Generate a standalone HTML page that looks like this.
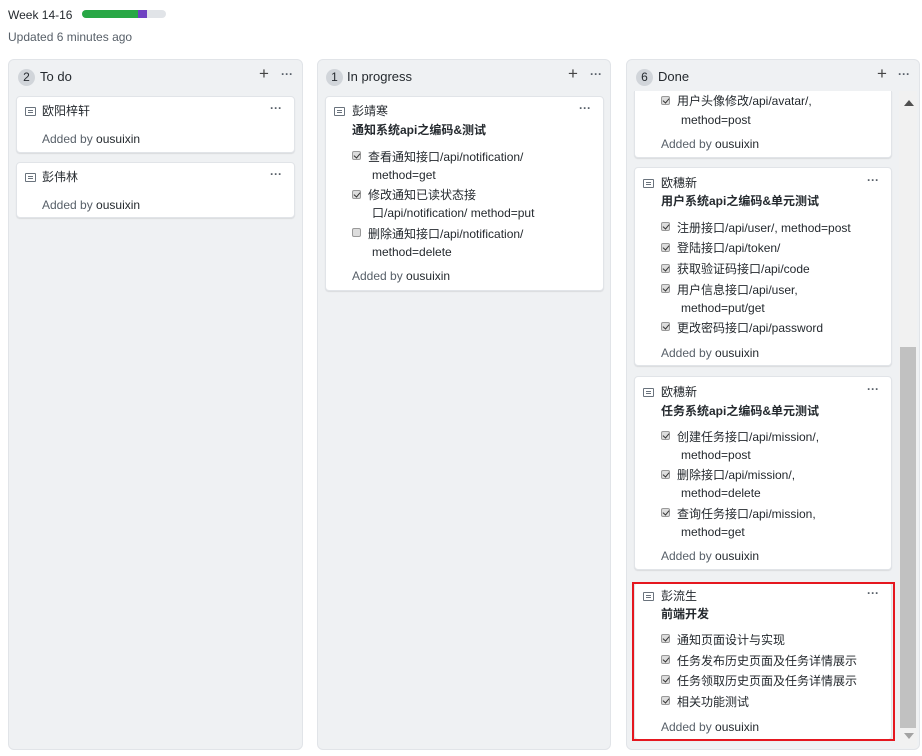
<!DOCTYPE html>
<html><head><meta charset="utf-8"><style>
*{margin:0;padding:0;box-sizing:border-box}
body{width:922px;height:756px;background:#fff;font-family:"Liberation Sans","Noto Sans CJK SC",sans-serif;font-size:12px;color:#24292e;position:relative;overflow:hidden}
.a{position:absolute;white-space:nowrap;line-height:16px}
.col{position:absolute;top:59px;height:691px;background:#eff1f3;border:1px solid #e1e4e8;border-radius:6px}
.card{position:absolute;background:#fff;border:1px solid #e1e4e8;border-radius:4px;box-shadow:0 1px 1px rgba(27,31,35,.1)}
.g{color:#586069}
.b{font-weight:bold}
.cnt{position:absolute;width:17px;height:17px;border-radius:9px;background:#d1d5da;font-size:12px;text-align:center;line-height:17px;color:#24292e}
.h{font-size:13px;font-weight:normal;color:#24292e}
.dots{position:absolute;font-size:12px;color:#586069;letter-spacing:0;font-weight:bold}
.ic{position:absolute;width:11px;height:9px;border:1px solid #6a737d;border-radius:1px}
.ic:after{content:"";position:absolute;left:2px;top:2px;width:5px;height:1px;background:#6a737d;box-shadow:0 2px 0 #6a737d}
.cb{position:absolute;width:9px;height:9px;background:#ddd;border:1px solid #999;border-radius:2px}
.cb.c:after{content:"";position:absolute;left:2px;top:0px;width:3px;height:5px;border:solid #333;border-width:0 1.5px 1.5px 0;transform:rotate(40deg)}
</style></head><body>
<div class="a" style="left:8px;top:7px;font-size:12px">Week 14-16</div>
<div style="position:absolute;left:82px;top:10px;width:84px;height:8px;background:#e1e4e8;border-radius:4px;overflow:hidden"><div style="width:56px;height:8px;background:#28a745;float:left"></div><div style="width:9px;height:8px;background:#6f42c1;float:left"></div></div>
<div class="a g" style="left:8px;top:29px">Updated 6 minutes ago</div>

<!-- To do -->
<div class="col" style="left:8px;width:295px"></div>
<div class="cnt" style="left:18px;top:69px">2</div>
<div class="a h" style="left:40px;top:69px">To do</div>
<div class="a" style="left:259px;top:66px;font-size:17px;color:#444">+</div>
<div class="dots" style="left:281px;top:67px">···</div>
<div class="card" style="left:16px;top:96px;width:279px;height:57px"></div>
<div class="ic" style="left:25px;top:107px"></div>
<div class="a" style="left:42px;top:103px">欧阳梓轩</div>
<div class="dots" style="left:270px;top:101px">···</div>
<div class="a g" style="left:42px;top:131px">Added by <span style="color:#24292e">ousuixin</span></div>
<div class="card" style="left:16px;top:162px;width:279px;height:56px"></div>
<div class="ic" style="left:25px;top:173px"></div>
<div class="a" style="left:42px;top:169px">彭伟林</div>
<div class="dots" style="left:270px;top:167px">···</div>
<div class="a g" style="left:42px;top:197px">Added by <span style="color:#24292e">ousuixin</span></div>

<!-- In progress -->
<div class="col" style="left:317px;width:294px"></div>
<div class="cnt" style="left:326px;top:69px">1</div>
<div class="a h" style="left:347px;top:69px">In progress</div>
<div class="a" style="left:568px;top:66px;font-size:17px;color:#444">+</div>
<div class="dots" style="left:590px;top:67px">···</div>
<div class="card" style="left:325px;top:96px;width:279px;height:195px"></div>
<div class="ic" style="left:334px;top:107px"></div>
<div class="a" style="left:352px;top:103px">彭靖寒</div>
<div class="dots" style="left:579px;top:101px">···</div>
<div class="a b" style="left:352px;top:122px">通知系统api之编码&amp;测试</div>
<div class="cb c" style="left:352px;top:151px"></div>
<div class="a" style="left:368px;top:149px">查看通知接口/api/notification/</div>
<div class="a" style="left:372px;top:167px">method=get</div>
<div class="cb c" style="left:352px;top:190px"></div>
<div class="a" style="left:368px;top:187px">修改通知已读状态接</div>
<div class="a" style="left:372px;top:205px">口/api/notification/ method=put</div>
<div class="cb" style="left:352px;top:228px"></div>
<div class="a" style="left:368px;top:226px">删除通知接口/api/notification/</div>
<div class="a" style="left:372px;top:244px">method=delete</div>
<div class="a g" style="left:352px;top:268px">Added by <span style="color:#24292e">ousuixin</span></div>

<!-- Done -->
<div class="col" style="left:626px;width:294px"></div>
<div class="cnt" style="left:636px;top:69px">6</div>
<div class="a h" style="left:658px;top:69px">Done</div>
<div class="a" style="left:877px;top:66px;font-size:17px;color:#444">+</div>
<div class="dots" style="left:898px;top:67px">···</div>
<div style="position:absolute;left:627px;top:91px;width:292px;height:657px;overflow:hidden">
 <div style="position:absolute;left:272px;top:0;width:18px;height:657px;background:#f1f1f1"></div>
 <div style="position:absolute;left:273px;top:256px;width:16px;height:381px;background:#c1c1c1"></div>
 <div style="position:absolute;left:277px;top:9px;width:0;height:0;border-left:5px solid transparent;border-right:5px solid transparent;border-bottom:6px solid #505050"></div>
 <div style="position:absolute;left:277px;top:642px;width:0;height:0;border-left:5px solid transparent;border-right:5px solid transparent;border-top:6px solid #a3a3a3"></div>
</div>
<div class="card" style="left:634px;top:91px;width:258px;height:67px;border-top:none;border-radius:0 0 4px 4px"></div>
<div class="cb c" style="left:661px;top:96px"></div>
<div class="a" style="left:677px;top:93px">用户头像修改/api/avatar/,</div>
<div class="a" style="left:681px;top:112px">method=post</div>
<div class="a g" style="left:661px;top:136px">Added by <span style="color:#24292e">ousuixin</span></div>

<div class="card" style="left:634px;top:167px;width:258px;height:199px"></div>
<div class="ic" style="left:643px;top:179px"></div>
<div class="a" style="left:661px;top:175px">欧穗新</div>
<div class="dots" style="left:867px;top:173px">···</div>
<div class="a b" style="left:661px;top:193px">用户系统api之编码&amp;单元测试</div>
<div class="cb c" style="left:661px;top:222px"></div><div class="a" style="left:677px;top:220px">注册接口/api/user/, method=post</div>
<div class="cb c" style="left:661px;top:243px"></div><div class="a" style="left:677px;top:240px">登陆接口/api/token/</div>
<div class="cb c" style="left:661px;top:264px"></div><div class="a" style="left:677px;top:261px">获取验证码接口/api/code</div>
<div class="cb c" style="left:661px;top:284px"></div><div class="a" style="left:677px;top:282px">用户信息接口/api/user,</div>
<div class="a" style="left:681px;top:300px">method=put/get</div>
<div class="cb c" style="left:661px;top:322px"></div><div class="a" style="left:677px;top:320px">更改密码接口/api/password</div>
<div class="a g" style="left:661px;top:345px">Added by <span style="color:#24292e">ousuixin</span></div>

<div class="card" style="left:634px;top:376px;width:258px;height:194px"></div>
<div class="ic" style="left:643px;top:388px"></div>
<div class="a" style="left:661px;top:384px">欧穗新</div>
<div class="dots" style="left:867px;top:382px">···</div>
<div class="a b" style="left:661px;top:403px">任务系统api之编码&amp;单元测试</div>
<div class="cb c" style="left:661px;top:431px"></div><div class="a" style="left:677px;top:429px">创建任务接口/api/mission/,</div>
<div class="a" style="left:681px;top:447px">method=post</div>
<div class="cb c" style="left:661px;top:470px"></div><div class="a" style="left:677px;top:467px">删除接口/api/mission/,</div>
<div class="a" style="left:681px;top:485px">method=delete</div>
<div class="cb c" style="left:661px;top:508px"></div><div class="a" style="left:677px;top:506px">查询任务接口/api/mission,</div>
<div class="a" style="left:681px;top:524px">method=get</div>
<div class="a g" style="left:661px;top:548px">Added by <span style="color:#24292e">ousuixin</span></div>

<div class="card" style="left:634px;top:582px;width:258px;height:158px"></div>
<div style="position:absolute;left:632px;top:582px;width:263px;height:159px;border:2px solid #e5171f"></div>
<div class="ic" style="left:643px;top:592px"></div>
<div class="a" style="left:661px;top:588px">彭流生</div>
<div class="dots" style="left:867px;top:586px">···</div>
<div class="a b" style="left:661px;top:606px">前端开发</div>
<div class="cb c" style="left:661px;top:634px"></div><div class="a" style="left:677px;top:632px">通知页面设计与实现</div>
<div class="cb c" style="left:661px;top:655px"></div><div class="a" style="left:677px;top:653px">任务发布历史页面及任务详情展示</div>
<div class="cb c" style="left:661px;top:675px"></div><div class="a" style="left:677px;top:673px">任务领取历史页面及任务详情展示</div>
<div class="cb c" style="left:661px;top:696px"></div><div class="a" style="left:677px;top:694px">相关功能测试</div>
<div class="a g" style="left:661px;top:719px">Added by <span style="color:#24292e">ousuixin</span></div>
</body></html>
